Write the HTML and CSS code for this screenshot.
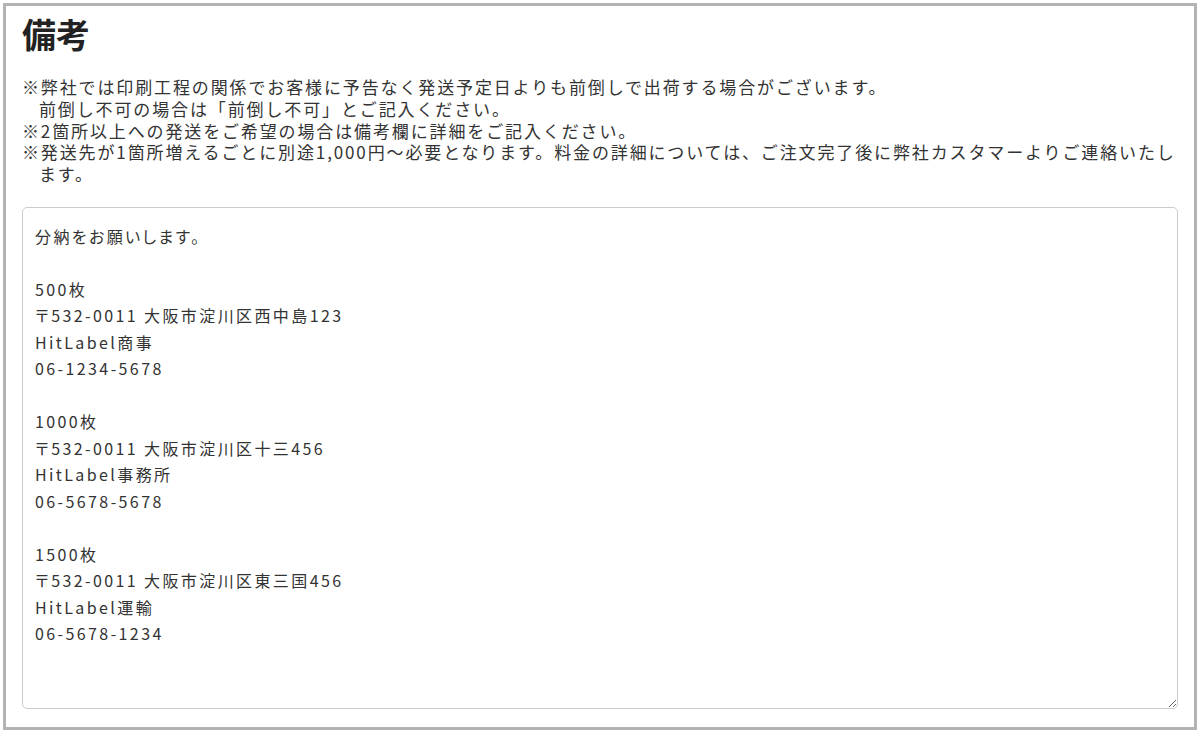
FILE: index.html
```html
<html>
<head>
    <meta charset="utf-8">
    <link rel="stylesheet" href="styles.css">
</head>
<body>
    <div class="panel">
        <h2 class="title">備考</h2>
        <ul class="notes">
            <li>※弊社では印刷工程の関係でお客様に予告なく発送予定日よりも前倒しで出荷する場合がございます。<br>前倒し不可の場合は「前倒し不可」とご記入ください。</li>
            <li>※2箇所以上への発送をご希望の場合は備考欄に詳細をご記入ください。</li>
            <li>※発送先が1箇所増えるごとに別途1,000円～必要となります。料金の詳細については、ご注文完了後に弊社カスタマーよりご連絡いたします。</li>
        </ul>
        <textarea class="remarks">分納をお願いします。

500枚
〒532-0011 大阪市淀川区西中島123
HitLabel商事
06-1234-5678

1000枚
〒532-0011 大阪市淀川区十三456
HitLabel事務所
06-5678-5678

1500枚
〒532-0011 大阪市淀川区東三国456
HitLabel運輸
06-5678-1234</textarea>
    </div>
</body>
</html>
```

FILE: styles.css
```css
body{
    margin: 0;
    padding: 3px;
    font-family: "Noto Sans CJK JP", "Noto Sans", sans-serif;
    color: #333;
    background: #fff;
}

.panel{
    border: 3px solid #b3b3b3;
    padding: 8px 16px 20px;
    height: 727px;
    box-sizing: border-box;
}

.title{
    margin: 0 0 22px;
    font-size: 34px;
    line-height: 40px;
    font-weight: bold;
    color: #222;
}

.notes{
    list-style: none;
    margin: 0 0 22px;
    padding: 0;
    font-size: 17px;
    line-height: 21.75px;
    letter-spacing: 0.11em;
}

.notes li{
    padding-left: 1em;
    text-indent: -1em;
}

.remarks{
    display: block;
    width: 100%;
    height: 502px;
    box-sizing: border-box;
    border: 1px solid #ccc;
    border-radius: 5px;
    padding: 15px 12px;
    font-family: "Noto Sans CJK JP", "Noto Sans", sans-serif;
    font-size: 16px;
    line-height: 26.5px;
    letter-spacing: 0.15em;
    font-feature-settings: "palt";
    color: #333;
    outline: none;
}
```
